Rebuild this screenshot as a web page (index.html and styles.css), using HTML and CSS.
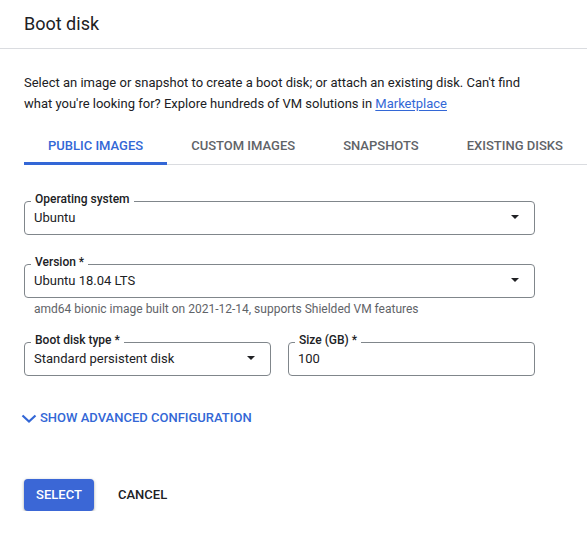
FILE: index.html
```html
<!DOCTYPE html>
<html lang="en">
<head>
<meta charset="utf-8">
<title>Boot disk</title>
<link rel="stylesheet" href="styles.css">
</head>
<body>
<div class="dialog">
  <header class="header">
    <h1 class="title">Boot disk</h1>
  </header>
  <div class="content">
    <p class="desc">Select an image or snapshot to create a boot disk; or attach an existing disk. Can't find what you're looking for? Explore hundreds of VM solutions in <a class="link" href="#">Marketplace</a></p>
    <nav class="tabs">
      <div class="tab active">PUBLIC IMAGES</div>
      <div class="tab">CUSTOM IMAGES</div>
      <div class="tab">SNAPSHOTS</div>
      <div class="tab">EXISTING DISKS</div>
    </nav>
    <div class="form">
      <div class="field field-os">
        <div class="box">
          <span class="label">Operating system</span>
          <span class="value">Ubuntu</span>
          <span class="arrow"></span>
        </div>
      </div>
      <div class="field field-version">
        <div class="box">
          <span class="label">Version *</span>
          <span class="value">Ubuntu 18.04 LTS</span>
          <span class="arrow"></span>
        </div>
        <div class="hint">amd64 bionic image built on 2021-12-14, supports Shielded VM features</div>
      </div>
      <div class="row">
        <div class="field">
          <div class="box">
            <span class="label">Boot disk type *</span>
            <span class="value">Standard persistent disk</span>
            <span class="arrow"></span>
          </div>
        </div>
        <div class="field">
          <div class="box">
            <span class="label">Size (GB) *</span>
            <span class="value">100</span>
          </div>
        </div>
      </div>
    </div>
    <div class="advanced">
      <svg class="chevron" width="16" height="10" viewBox="0 0 16 10"><polyline points="1.5,1.5 8,7.5 14.5,1.5" fill="none" stroke="#3367d6" stroke-width="2.2"/></svg>
      <span class="advanced-text">SHOW ADVANCED CONFIGURATION</span>
    </div>
    <div class="actions">
      <button class="btn btn-primary">SELECT</button>
      <button class="btn btn-text">CANCEL</button>
    </div>
  </div>
</div>
</body>
</html>
```

FILE: styles.css
```css
* { box-sizing: border-box; }
html, body { margin: 0; padding: 0; background: #fff; }
body {
  font-family: Roboto, "Liberation Sans", Arial, sans-serif;
  color: #202124;
  width: 587px;
  overflow: hidden;
}
.dialog { width: 587px; }
.header {
  height: 49px;
  border-bottom: 1px solid #dadce0;
  padding: 0 24px;
}
.title {
  margin: 0;
  font-size: 18px;
  font-weight: 400;
  line-height: 48px;
  color: #202124;
}
.content { padding-left: 24px; }
.desc {
  margin: 23px 0 0 0;
  max-width: 505px;
  font-size: 13px;
  line-height: 21px;
  color: #202124;
}
.link { color: #3367d6; text-decoration: underline; text-underline-offset: 2px; }
.tabs {
  margin-top: 15px;
  display: flex;
  border-bottom: 1px solid #dadce0;
  height: 36px;
}
.tab {
  padding: 1px 24px 0;
  line-height: 32px;
  height: 36px;
  font-size: 13px;
  font-weight: 500;
  color: #5f6368;
  border-bottom: 3px solid transparent;
  white-space: nowrap;
}
.tab.active { color: #3367d6; border-bottom-color: #3367d6; }
.form { width: 511px; margin-top: 36px; display: flex; flex-direction: column; }
.field-version { margin-top: 29px; }
.box {
  position: relative;
  height: 34px;
  border: 1px solid #80868b;
  border-radius: 4px;
  padding: 0 15px 1px 9px;
  display: flex;
  align-items: center;
}
.label {
  position: absolute;
  top: -10px;
  left: 6px;
  padding: 0 4px;
  background: #fff;
  font-size: 12px;
  font-weight: 500;
  line-height: 14px;
  color: #202124;
  white-space: nowrap;
}
.value {
  flex: 1;
  font-size: 13px;
  line-height: 30px;
  color: #202124;
  white-space: nowrap;
}
.arrow {
  width: 0;
  height: 0;
  border-left: 4px solid transparent;
  border-right: 4px solid transparent;
  border-top: 4px solid #202124;
  margin-bottom: 2px;
}
.hint {
  margin-top: 3px;
  padding-left: 10px;
  font-size: 12px;
  line-height: 16px;
  color: #5f6368;
}
.row {
  margin-top: 25px;
  display: grid;
  grid-template-columns: 247px 247px;
  column-gap: 17px;
}
.advanced {
  margin-top: 30px;
  height: 24px;
  display: flex;
  align-items: center;
  gap: 3px;
  margin-left: -3px;
}
.chevron { display: block; margin-top: 1px; }
.advanced-text {
  font-size: 13px;
  font-weight: 500;
  line-height: 24px;
  color: #3367d6;
}
.actions {
  margin-top: 49px;
  display: flex;
  gap: 12px;
}
.btn {
  font-family: inherit;
  font-size: 13px;
  font-weight: 500;
  height: 32px;
  line-height: 32px;
  padding: 0 12px;
  border: none;
  border-radius: 4px;
  background: transparent;
  cursor: pointer;
}
.btn-primary {
  width: 70px;
  background: #3b67d6;
  color: #fff;
  box-shadow: 0 1px 2px rgba(60,64,67,.3), 0 1px 3px 1px rgba(60,64,67,.15);
}
.btn-text { color: #202124; }
```
